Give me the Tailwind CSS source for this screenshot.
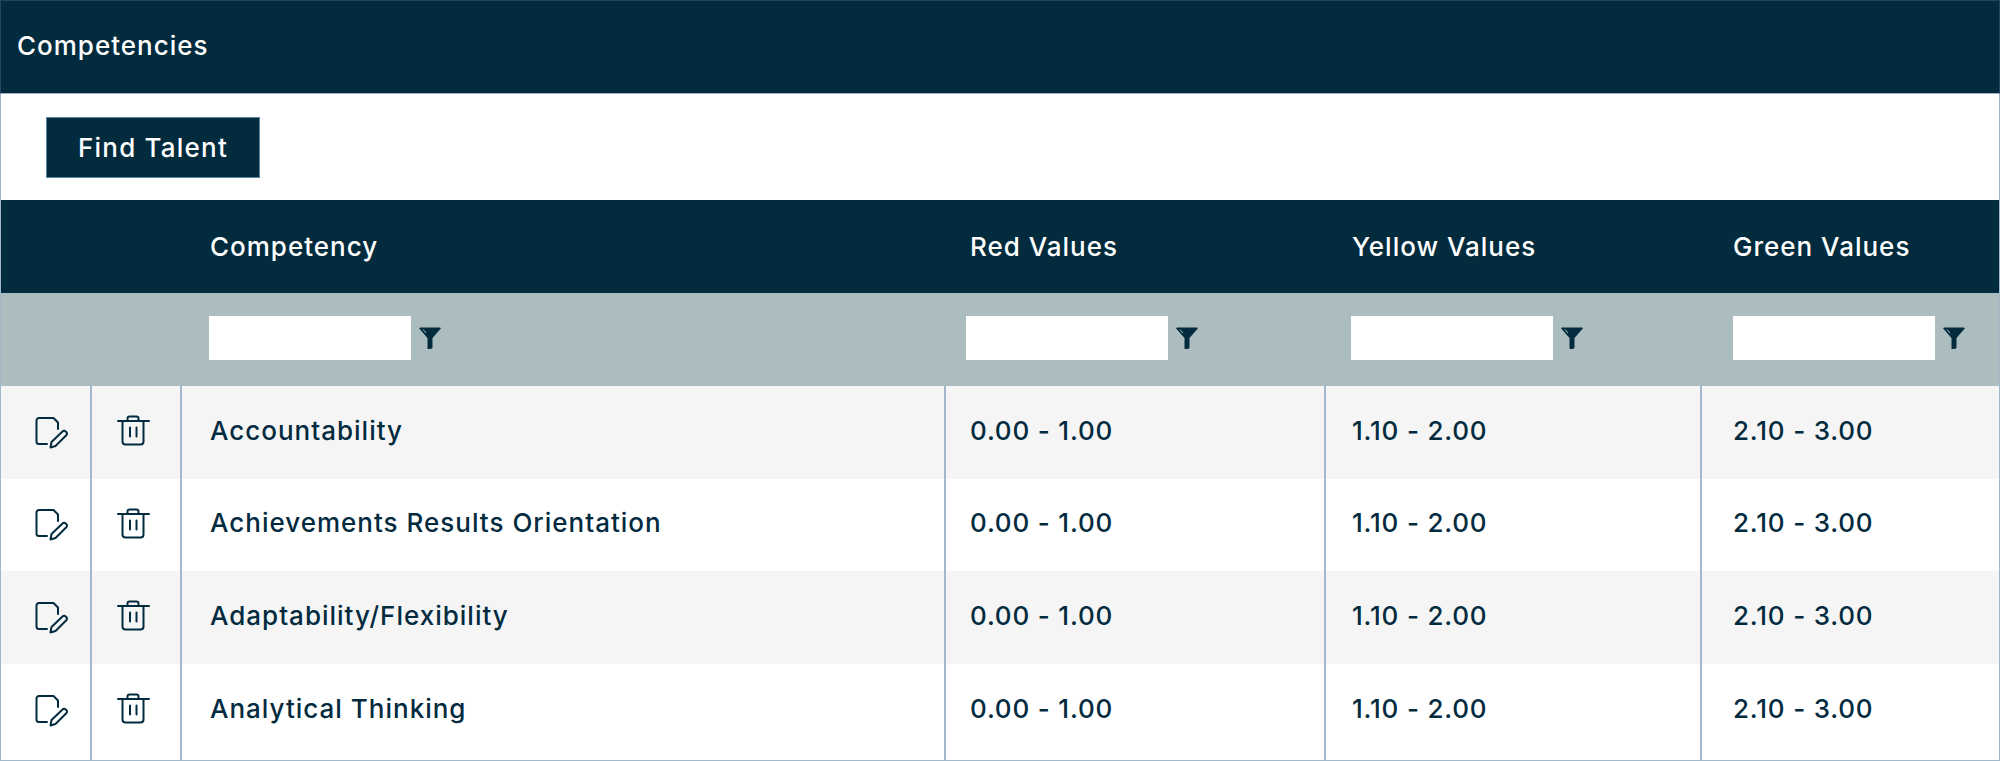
<!DOCTYPE html>
<html lang="en">
<head>
  <meta charset="UTF-8" />
  <title>Competencies</title>
  <script src="https://cdn.jsdelivr.net/npm/@tailwindcss/browser@4"></script>
</head>
<body class="bg-white font-[Inter,sans-serif] font-medium text-[#032b3f] text-[26px] tracking-[1px]">
  <main class="w-[2000px] h-[761px] overflow-hidden flex flex-col">

    <!-- Title bar -->
    <header class="h-[94px] shrink-0 flex items-center pl-4 pb-[3px] bg-[#022b3e] text-white border border-[#1f4664] border-b-[#9fb3c8]">
      <h1>Competencies</h1>
    </header>

    <!-- Toolbar -->
    <div class="h-[106px] shrink-0 flex items-center pl-[45px] border-x border-[#a3b7cb]">
      <button class="w-[214px] h-[61px] bg-[#022b3e] text-white tracking-[1.2px] border border-[#5d83a6]">Find Talent</button>
    </div>

    <!-- Table -->
    <div class="flex-1 border-x border-b border-[#a3b7cb]">
      <table class="w-full table-fixed border-separate border-spacing-0 text-left">
        <colgroup>
          <col class="w-[91px]" />
          <col class="w-[90px]" />
          <col class="w-[764px]" />
          <col class="w-[380px]" />
          <col class="w-[376px]" />
          <col />
        </colgroup>
        <thead>
          <tr class="h-[93px] bg-[#022b3e] text-white">
            <th></th>
            <th></th>
            <th class="pl-7 font-medium">Competency</th>
            <th class="pl-6 font-medium">Red Values</th>
            <th class="pl-[26px] font-medium">Yellow Values</th>
            <th class="pl-[31px] font-medium">Green Values</th>
          </tr>
          <tr class="h-[93px] bg-[#abbdbf]">
            <th></th>
            <th></th>
            <th class="pl-[27px] pb-[3px]">
              <div class="flex items-center gap-2">
                <input type="text" aria-label="Filter competency" class="w-[202px] h-[44px] bg-white" />
                <svg class="w-[22px] h-[22px] text-[#022b3e]" viewBox="0 0 22 22"><path fill="currentColor" d="M1 .5h20a.8.8 0 0 1 .6 1.3L13.500 11v9.500a1.500 1.500 0 0 1-1 1.300l-2.500.2a1 1 0 0 1-1.500-1V11L.4 1.800A.8.800 0 0 1 1 .5z"/><path stroke="#abbdbf" stroke-width="1" d="M4 2.500l3 3.500"/></svg>
              </div>
            </th>
            <th class="pl-5 pb-[3px]">
              <div class="flex items-center gap-2">
                <input type="text" aria-label="Filter red values" class="w-[202px] h-[44px] bg-white" />
                <svg class="w-[22px] h-[22px] text-[#022b3e]" viewBox="0 0 22 22"><path fill="currentColor" d="M1 .5h20a.8.8 0 0 1 .6 1.3L13.500 11v9.500a1.500 1.500 0 0 1-1 1.300l-2.500.2a1 1 0 0 1-1.500-1V11L.4 1.800A.8.800 0 0 1 1 .5z"/><path stroke="#abbdbf" stroke-width="1" d="M4 2.500l3 3.500"/></svg>
              </div>
            </th>
            <th class="pl-[25px] pb-[3px]">
              <div class="flex items-center gap-2">
                <input type="text" aria-label="Filter yellow values" class="w-[202px] h-[44px] bg-white" />
                <svg class="w-[22px] h-[22px] text-[#022b3e]" viewBox="0 0 22 22"><path fill="currentColor" d="M1 .5h20a.8.8 0 0 1 .6 1.3L13.500 11v9.500a1.500 1.500 0 0 1-1 1.300l-2.500.2a1 1 0 0 1-1.500-1V11L.4 1.800A.8.800 0 0 1 1 .5z"/><path stroke="#abbdbf" stroke-width="1" d="M4 2.500l3 3.500"/></svg>
              </div>
            </th>
            <th class="pl-[31px] pb-[3px]">
              <div class="flex items-center gap-2">
                <input type="text" aria-label="Filter green values" class="w-[202px] h-[44px] bg-white" />
                <svg class="w-[22px] h-[22px] text-[#022b3e]" viewBox="0 0 22 22"><path fill="currentColor" d="M1 .5h20a.8.8 0 0 1 .6 1.3L13.500 11v9.500a1.500 1.500 0 0 1-1 1.300l-2.500.2a1 1 0 0 1-1.500-1V11L.4 1.800A.8.800 0 0 1 1 .5z"/><path stroke="#abbdbf" stroke-width="1" d="M4 2.500l3 3.500"/></svg>
              </div>
            </th>
          </tr>
        </thead>
        <tbody>
          <tr class="h-[93px] bg-[#f5f5f5]">
            <td class="pl-[33px] border-r-2 border-[#a3b7cb]"><svg class="w-9 h-9" viewBox="0 0 36 36" fill="none" stroke="currentColor" stroke-width="2" stroke-linejoin="round" stroke-linecap="round"><path d="M13 29H5a2.500 2.500 0 0 1-2.500-2.500V5.500A2.500 2.500 0 0 1 5 3h14.500L24 7.500V14"/><path d="M16.500 32.500l1-5.500 11-10.500a2.200 2.200 0 0 1 3.200 0l.6.6a2.200 2.200 0 0 1 0 3.200L21.500 31z"/></svg></td>
            <td class="pl-[23px] pb-[3px] border-r-2 border-[#a3b7cb]"><svg class="w-9 h-9" viewBox="0 0 36 36" fill="none" stroke="currentColor" stroke-width="2" stroke-linecap="round"><path d="M3 8h31M7.500 8v20.500a3 3 0 0 0 3 3h15a3 3 0 0 0 3-3V8M12.500 8V5.500a2 2 0 0 1 2-2h7a2 2 0 0 1 2 2V8M15 14.500v9M21.500 14.500v9"/></svg></td>
            <td class="pl-7 pb-[5px] border-r-2 border-[#a3b7cb]">Accountability</td>
            <td class="pl-6 pb-[5px] tracking-[0.8px] border-r-2 border-[#a3b7cb]">0.00 - 1.00</td>
            <td class="pl-[26px] pb-[5px] tracking-[0.8px] border-r-2 border-[#a3b7cb]">1.10 - 2.00</td>
            <td class="pl-[31px] pb-[5px] tracking-[0.8px]">2.10 - 3.00</td>
          </tr>
          <tr class="h-[92px] bg-white">
            <td class="pl-[33px] border-r-2 border-[#a3b7cb]"><svg class="w-9 h-9" viewBox="0 0 36 36" fill="none" stroke="currentColor" stroke-width="2" stroke-linejoin="round" stroke-linecap="round"><path d="M13 29H5a2.500 2.500 0 0 1-2.500-2.500V5.500A2.500 2.500 0 0 1 5 3h14.500L24 7.500V14"/><path d="M16.500 32.500l1-5.500 11-10.500a2.200 2.200 0 0 1 3.200 0l.6.6a2.200 2.200 0 0 1 0 3.200L21.500 31z"/></svg></td>
            <td class="pl-[23px] pb-[3px] border-r-2 border-[#a3b7cb]"><svg class="w-9 h-9" viewBox="0 0 36 36" fill="none" stroke="currentColor" stroke-width="2" stroke-linecap="round"><path d="M3 8h31M7.500 8v20.500a3 3 0 0 0 3 3h15a3 3 0 0 0 3-3V8M12.500 8V5.500a2 2 0 0 1 2-2h7a2 2 0 0 1 2 2V8M15 14.500v9M21.500 14.500v9"/></svg></td>
            <td class="pl-7 pb-[5px] border-r-2 border-[#a3b7cb]">Achievements Results Orientation</td>
            <td class="pl-6 pb-[5px] tracking-[0.8px] border-r-2 border-[#a3b7cb]">0.00 - 1.00</td>
            <td class="pl-[26px] pb-[5px] tracking-[0.8px] border-r-2 border-[#a3b7cb]">1.10 - 2.00</td>
            <td class="pl-[31px] pb-[5px] tracking-[0.8px]">2.10 - 3.00</td>
          </tr>
          <tr class="h-[93px] bg-[#f5f5f5]">
            <td class="pl-[33px] border-r-2 border-[#a3b7cb]"><svg class="w-9 h-9" viewBox="0 0 36 36" fill="none" stroke="currentColor" stroke-width="2" stroke-linejoin="round" stroke-linecap="round"><path d="M13 29H5a2.500 2.500 0 0 1-2.500-2.500V5.500A2.500 2.500 0 0 1 5 3h14.500L24 7.500V14"/><path d="M16.500 32.500l1-5.500 11-10.500a2.200 2.200 0 0 1 3.200 0l.6.6a2.200 2.200 0 0 1 0 3.200L21.500 31z"/></svg></td>
            <td class="pl-[23px] pb-[3px] border-r-2 border-[#a3b7cb]"><svg class="w-9 h-9" viewBox="0 0 36 36" fill="none" stroke="currentColor" stroke-width="2" stroke-linecap="round"><path d="M3 8h31M7.500 8v20.500a3 3 0 0 0 3 3h15a3 3 0 0 0 3-3V8M12.500 8V5.500a2 2 0 0 1 2-2h7a2 2 0 0 1 2 2V8M15 14.500v9M21.500 14.500v9"/></svg></td>
            <td class="pl-7 pb-[5px] border-r-2 border-[#a3b7cb]">Adaptability/Flexibility</td>
            <td class="pl-6 pb-[5px] tracking-[0.8px] border-r-2 border-[#a3b7cb]">0.00 - 1.00</td>
            <td class="pl-[26px] pb-[5px] tracking-[0.8px] border-r-2 border-[#a3b7cb]">1.10 - 2.00</td>
            <td class="pl-[31px] pb-[5px] tracking-[0.8px]">2.10 - 3.00</td>
          </tr>
          <tr class="h-[96px] bg-white">
            <td class="pl-[33px] pb-[3px] border-r-2 border-[#a3b7cb]"><svg class="w-9 h-9" viewBox="0 0 36 36" fill="none" stroke="currentColor" stroke-width="2" stroke-linejoin="round" stroke-linecap="round"><path d="M13 29H5a2.500 2.500 0 0 1-2.500-2.500V5.500A2.500 2.500 0 0 1 5 3h14.500L24 7.500V14"/><path d="M16.500 32.500l1-5.500 11-10.500a2.200 2.200 0 0 1 3.200 0l.6.6a2.200 2.200 0 0 1 0 3.200L21.500 31z"/></svg></td>
            <td class="pl-[23px] pb-[6px] border-r-2 border-[#a3b7cb]"><svg class="w-9 h-9" viewBox="0 0 36 36" fill="none" stroke="currentColor" stroke-width="2" stroke-linecap="round"><path d="M3 8h31M7.500 8v20.500a3 3 0 0 0 3 3h15a3 3 0 0 0 3-3V8M12.500 8V5.500a2 2 0 0 1 2-2h7a2 2 0 0 1 2 2V8M15 14.500v9M21.500 14.500v9"/></svg></td>
            <td class="pl-7 pb-2 border-r-2 border-[#a3b7cb]">Analytical Thinking</td>
            <td class="pl-6 pb-2 tracking-[0.8px] border-r-2 border-[#a3b7cb]">0.00 - 1.00</td>
            <td class="pl-[26px] pb-2 tracking-[0.8px] border-r-2 border-[#a3b7cb]">1.10 - 2.00</td>
            <td class="pl-[31px] pb-2 tracking-[0.8px]">2.10 - 3.00</td>
          </tr>
        </tbody>
      </table>
    </div>
  </main>
</body>
</html>
